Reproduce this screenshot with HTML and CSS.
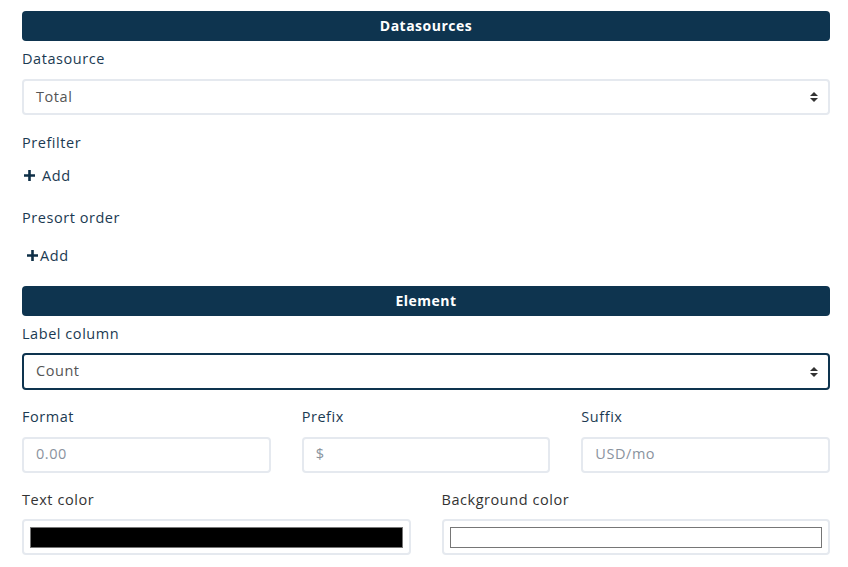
FILE: index.html
```html
<!DOCTYPE html>
<html>
<head>
<meta charset="utf-8">
<link rel="stylesheet" href="styles.css">
</head>
<body>
<div class="panel">
  <div class="section-head">Datasources</div>
  <div class="field-label">Datasource</div>
  <div class="select">
    <span>Total</span>
    <svg class="caret" width="8" height="10" viewBox="0 0 8 10"><path d="M4 0L8 4H0z M4 10L0 6H8z" fill="#333"/></svg>
  </div>
  <div class="field-label gap">Prefilter</div>
  <div class="add-row first">
    <svg class="plus" width="11" height="11" viewBox="0 0 11 11"><path d="M4.2 0h2.6v4.2H11v2.6H6.8V11H4.2V6.8H0V4.2h4.2z" fill="#0e2f47"/></svg>
    <span class="add-text">Add</span>
  </div>
  <div class="field-label gap-b">Presort order</div>
  <div class="add-row second">
    <svg class="plus" width="11" height="11" viewBox="0 0 11 11"><path d="M4.2 0h2.6v4.2H11v2.6H6.8V11H4.2V6.8H0V4.2h4.2z" fill="#0e2f47"/></svg>
    <span class="add-text">Add</span>
  </div>
  <div class="section-head element">Element</div>
  <div class="field-label">Label column</div>
  <div class="select focused">
    <span>Count</span>
    <svg class="caret" width="8" height="10" viewBox="0 0 8 10"><path d="M4 0L8 4H0z M4 10L0 6H8z" fill="#333"/></svg>
  </div>
  <div class="row three">
    <div class="col">
      <div class="field-label">Format</div>
      <div class="input"><span class="ph">0.00</span></div>
    </div>
    <div class="col">
      <div class="field-label">Prefix</div>
      <div class="input"><span class="ph">$</span></div>
    </div>
    <div class="col">
      <div class="field-label">Suffix</div>
      <div class="input"><span class="ph">USD/mo</span></div>
    </div>
  </div>
  <div class="row two">
    <div class="col">
      <div class="field-label dark">Text color</div>
      <div class="input color"><div class="swatch black"></div></div>
    </div>
    <div class="col">
      <div class="field-label dark">Background color</div>
      <div class="input color"><div class="swatch white"></div></div>
    </div>
  </div>
</div>
</body>
</html>
```
FILE: styles.css
```css
* { box-sizing: border-box; }
html, body { margin: 0; padding: 0; background: #fff; }
body {
  font-family: "Open Sans", "Noto Sans", sans-serif;
  font-size: 14.5px;
  color: #1b3a52;
  width: 848px;
  height: 567px;
  overflow: hidden;
}
.panel {
  padding: 11px 18px 0 22px;
}
.section-head {
  height: 30px;
  line-height: 30px;
  background: #0e344f;
  color: #fff;
  border-radius: 4px;
  text-align: center;
  font-weight: 700;
  font-size: 14px;
  letter-spacing: 0.5px;
}
.section-head.element { margin-top: 20px; }
.field-label {
  height: 21px;
  line-height: 21px;
  margin-top: 7px;
  margin-bottom: 10px;
  color: #1b3a52;
  letter-spacing: 0.55px;
}
.field-label.gap { margin-top: 17px; margin-bottom: 0; }
.field-label.gap-b { margin-top: 21px; margin-bottom: 0; }
.field-label.dark { color: #333; }
.select {
  height: 36px;
  border: 2px solid #e5e9ef;
  border-radius: 4px;
  display: flex;
  align-items: center;
  justify-content: space-between;
  padding: 0 10px 2px 12px;
  color: #555;
  letter-spacing: 0.55px;
}
.select .caret { margin-top: 2px; }
.select.focused { height: 37px; border-color: #0e344f; }
.field-label + .select.focused { margin-top: -1px; }
.add-row {
  height: 21px;
  display: flex;
  align-items: center;
  color: #1b3a52;
  font-weight: 500;
  letter-spacing: 0.55px;
}
.add-row.first { margin-top: 12px; padding-left: 2px; }
.add-row.first .add-text { margin-left: 7px; }
.add-row.second { margin-top: 17px; padding-left: 5px; }
.add-row.second .add-text { margin-left: 2px; }
.row { display: grid; gap: 31px; }
.row.three { grid-template-columns: 1fr 1fr 1fr; margin-top: 16px; }
.row.two { grid-template-columns: 1fr 1fr; margin-top: 16px; }
.row .field-label { margin-top: 0; margin-bottom: 10px; }
.row.two .field-label { margin-bottom: 9px; }
.input {
  height: 36px;
  border: 2px solid #e5e9ef;
  border-radius: 4px;
  display: flex;
  align-items: center;
  padding: 0 0 3px 12px;
}
.ph { color: #8a939e; letter-spacing: 0.55px; }
.input.color { padding: 0 6px; }
.swatch {
  flex: 1;
  height: 21px;
  border: 1px solid #767676;
}
.swatch.black { background: #000; }
.swatch.white { background: #fff; }
```
